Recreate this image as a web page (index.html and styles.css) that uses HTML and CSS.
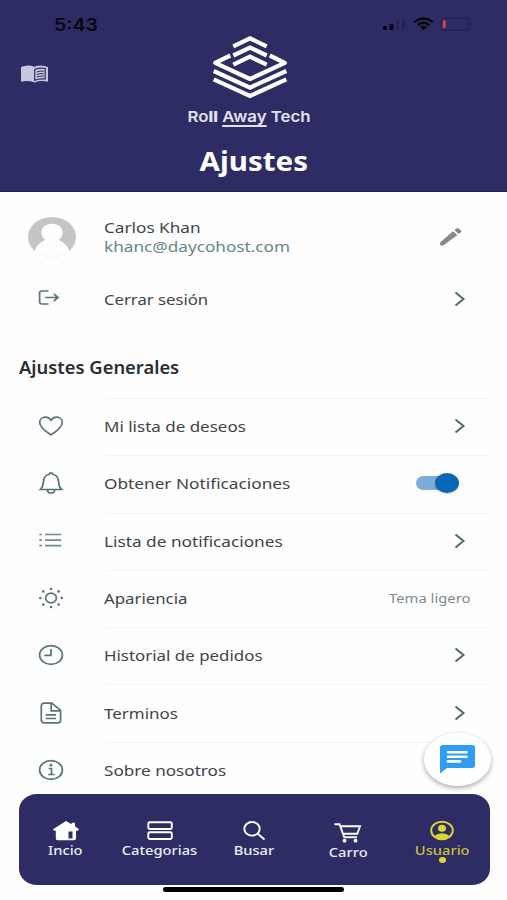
FILE: index.html
```html
<!DOCTYPE html>
<html lang="es">
<head>
<meta charset="utf-8">
<title>Ajustes</title>
<link rel="stylesheet" href="styles.css">
</head>
<body>
<main class="screen">
  <header class="header">
    <div class="status">
      <span class="time">5:43</span>
      <svg class="status-icons" width="94" height="18" viewBox="0 0 94 18">
        <rect x="1" y="11" width="4" height="4" rx="1"/><rect x="7.5" y="9" width="4" height="6" rx="1"/>
        <g fill="#25234f"><rect x="14" y="6" width="3" height="9" rx="1"/><rect x="20" y="4" width="3" height="11" rx="1"/></g>
        <g fill="none" stroke="#050509" stroke-width="2.4"><path d="M32.3 7.1Q41.5-.3 50.7 7.1M35.7 10.2Q41.5 5.5 47.3 10.2"/></g>
        <path d="M38 12Q41.5 9.5 45 12L41.5 15.2Z"/>
        <rect x="59.5" y="3.3" width="28" height="12" rx="3.5" fill="none" stroke="#25224d" stroke-width="1.4"/>
        <path d="M89.5 6.5Q93 9 89.5 11.8Z" fill="#25224d"/>
        <rect x="60.7" y="5.2" width="2.9" height="8" rx="1" fill="#d7435e"/>
      </svg>
    </div>
    <div class="brand-row">
      <svg class="book" width="27" height="18" viewBox="0 0 27 18">
        <path fill="#c5c5dc" d="M0 2Q7-1 13.5 1.8Q20-1 27 2V16.8Q20 15 13.5 17.5Q7 15 0 16.8Z"/>
        <path fill="none" stroke="#2e2c64" stroke-width="1.2" d="M13.7 4.5Q19 2.5 24.2 3.5V14Q19 13.2 13.7 15.3Z"/>
        <path fill="none" stroke="#2e2c64" stroke-width="1" d="M15.7 7Q19 5.7 22.7 6.2M15.7 9.5Q19 8.2 22.7 8.7M15.7 12Q19 10.7 22.7 11.2"/>
      </svg>
      <svg class="logo" width="76" height="64" viewBox="0 0 76 64" fill="none" stroke="#fff" stroke-width="4.2">
        <path d="M21.3 11.3L38 3.3L54.7 11.3M21.3 20.5L38 12.5L54.7 20.5M21.3 29.7L38 21.7L54.7 29.7"/>
        <path stroke-linejoin="round" d="M18.3 20.5L3.2 27.8L38 44L72.8 27.8L57.7 20.5"/>
        <path d="M1.7 36L38 52.6L74.3 36M1.7 44.3L38 61L74.3 44.3"/>
      </svg>
    </div>
    <div class="brand"><span class="roll">Ro<b>ll</b></span> <span class="away">Away</span> Tech</div>
    <h1 class="title">Ajustes</h1>
  </header>

  <section class="row profile">
    <svg class="avatar" width="48" height="40" viewBox="0 0 48 40">
      <clipPath id="face"><ellipse cx="24" cy="20" rx="24" ry="20"/></clipPath>
      <g clip-path="url(#face)"><path fill="#c5c5c5" d="M0 0H48V40H0Z"/><path fill="#fefefe" d="M24 6.8C17.5 6.8 13.4 10.5 13.4 15.2C13.4 18.5 15 21.2 17.4 23C12 25 8.5 28.5 6.6 34L5 40H43L41.4 34C39.5 28.5 36 25 30.6 23C33 21.2 34.6 18.5 34.6 15.2C34.6 10.5 30.5 6.8 24 6.8Z"/></g>
    </svg>
    <div class="label who"><div class="t name">Carlos Khan</div><div class="t mail">khanc@daycohost.com</div></div>
    <svg class="pencil" width="24" height="20" viewBox="0 0 24 20" fill="#888"><path d="M1.3 15.2L14 4.2L18.4 7.9L5.4 17.8L2.4 18.7Q.6 18.5 1.3 15.2ZM15.3 3L17.6 1.4Q18.8.7 20 1.7L22 3.4Q23 4.4 21.9 5.3L19.7 7Z"/></svg>
  </section>
  <section class="row logout">
    <svg class="ic" width="26" height="22" viewBox="0 0 26 22"><path d="M10.5 4H3.8Q1.6 4 1.6 6V14.8Q1.6 17 3.8 17H10.5M7.2 10.5H19.6M15.8 6.8L20 10.5L15.8 14.2"/></svg>
    <div class="label"><span class="t w-logout">Cerrar sesión</span></div>
    <svg class="chev" width="12" height="16" viewBox="0 0 12 16"><path d="M1.5 1.5L9.5 8L1.5 14.5"/></svg>
  </section>

  <h2 class="section"><span class="t w-section">Ajustes Generales</span></h2>

  <div class="list">
    <div class="row item">
      <svg class="ic" width="26" height="22" viewBox="0 0 26 22"><path d="M13 19.8C9 17.2 1.7 12.7 1.7 7.5C1.7 4.1 4.3 2.2 7.3 2.2C9.8 2.2 11.8 3.3 13 5.2C14.2 3.3 16.2 2.2 18.7 2.2C21.7 2.2 24.3 4.1 24.3 7.5C24.3 12.7 17 17.2 13 19.8Z"/></svg>
      <div class="label"><span class="t w-wish">Mi lista de deseos</span></div>
      <svg class="chev" width="12" height="16" viewBox="0 0 12 16"><path d="M1.5 1.5L9.5 8L1.5 14.5"/></svg>
    </div>
    <div class="row item">
      <svg class="ic" width="26" height="22" viewBox="0 0 26 22"><path d="M2.5 17.5C7 13.5 4 8.5 7 4.7Q8.5 2.8 11 2.5Q11.4.9 13 .9Q14.6.9 15 2.5Q17.5 2.8 19 4.7C22 8.5 19 13.5 23.5 17.5ZM9.2 17.8Q9.8 21 13 21Q16.2 21 16.8 17.8"/></svg>
      <div class="label"><span class="t w-notif">Obtener Notificaciones</span></div>
      <div class="switch"><i class="knob"></i></div>
    </div>
    <div class="row item">
      <svg class="ic list-ic" width="26" height="22" viewBox="0 0 26 22"><path d="M1.3 4.5H4M7 4.5H23.2M1.3 10.1H4M7 10.1H23.2M1.3 15.7H4M7 15.7H23.2"/></svg>
      <div class="label"><span class="t w-nlist">Lista de notificaciones</span></div>
      <svg class="chev" width="12" height="16" viewBox="0 0 12 16"><path d="M1.5 1.5L9.5 8L1.5 14.5"/></svg>
    </div>
    <div class="row item">
      <svg class="ic" width="26" height="22" viewBox="0 0 26 22"><ellipse cx="13" cy="11" rx="5.4" ry="4.8"/><g class="dots"><circle cx="13" cy="2" r="1.3"/><circle cx="13" cy="20" r="1.3"/><circle cx="2.3" cy="11" r="1.3"/><circle cx="23.7" cy="11" r="1.3"/><circle cx="5.3" cy="4.4" r="1.3"/><circle cx="20.7" cy="4.4" r="1.3"/><circle cx="5.3" cy="17.6" r="1.3"/><circle cx="20.7" cy="17.6" r="1.3"/></g></svg>
      <div class="label"><span class="t w-look">Apariencia</span></div>
      <span class="theme">Tema ligero</span>
    </div>
    <div class="row item">
      <svg class="ic" width="26" height="22" viewBox="0 0 26 22"><ellipse cx="13" cy="11" rx="11.4" ry="9.3"/><path d="M13 5V11.4H6.3"/></svg>
      <div class="label"><span class="t w-hist">Historial de pedidos</span></div>
      <svg class="chev" width="12" height="16" viewBox="0 0 12 16"><path d="M1.5 1.5L9.5 8L1.5 14.5"/></svg>
    </div>
    <div class="row item">
      <svg class="ic" width="26" height="22" viewBox="0 0 26 22"><path d="M6.3 1.2H13.8L22.6 8.3V18.2Q22.6 20.9 19.6 20.9H6.3Q3.3 20.9 3.3 18.2V3.9Q3.3 1.2 6.3 1.2ZM13.2 1.5V8.8H22.2M7.7 12.8H18.2M7.7 16.5H18.2"/></svg>
      <div class="label"><span class="t w-terms">Terminos</span></div>
      <svg class="chev" width="12" height="16" viewBox="0 0 12 16"><path d="M1.5 1.5L9.5 8L1.5 14.5"/></svg>
    </div>
    <div class="row item last">
      <svg class="ic" width="26" height="22" viewBox="0 0 26 22"><ellipse cx="13" cy="11" rx="11.4" ry="9.3"/><path d="M10.6 9.5H13.5V15.3M10.2 15.5H16.4"/><circle class="dots" cx="12.9" cy="6.2" r="1.4"/></svg>
      <div class="label"><span class="t w-about">Sobre nosotros</span></div>
    </div>
    <div class="fab">
      <svg width="35" height="29" viewBox="0 0 35 29"><path fill="#319df0" d="M3 0H32Q35 0 35 2.5V20.5Q35 23 32 23H7L0 28.5V2.5Q0 0 3 0Z"/><path stroke="#fff" stroke-width="2.6" stroke-linecap="round" d="M8 7.2H26.5M8 11.8H26.5M8 16.4H20"/></svg>
    </div>
  </div>

  <nav class="nav">
    <a class="tab"><svg width="28" height="22" viewBox="0 0 28 22"><path fill="#fff" d="M14 1L19.6 4.3V2.8H23V6.3L27 9.3L25.8 10.7H24V18.5Q24 20.3 22 20.3H5.5Q3.8 20.3 3.8 18.5V10.7H2.2L1 9.3Z"/><path fill="#2e2c64" d="M16.5 11.5H20.5V18.5H16.5Z"/></svg><span>Incio</span></a>
    <a class="tab"><svg width="28" height="22" viewBox="0 0 28 22"><rect x="2.3" y="2.2" width="23.5" height="6.8" rx="1.5"/><rect x="2.3" y="12.2" width="23.5" height="6.8" rx="1.5"/></svg><span>Categorias</span></a>
    <a class="tab"><svg width="28" height="22" viewBox="0 0 28 22"><ellipse cx="12" cy="8.8" rx="7.7" ry="6.8"/><path d="M17.5 13.5L24.5 19.5"/></svg><span>Busar</span></a>
    <a class="tab cart"><svg width="28" height="22" viewBox="0 0 28 22"><path d="M.5 2.2H5.5L10.3 15.3H23M6.3 4.2H26L23.3 11.7H9"/><g fill="#fff" stroke="none"><circle cx="10.5" cy="18.7" r="1.9"/><circle cx="21.5" cy="18.7" r="1.9"/></g></svg><span>Carro</span></a>
    <a class="tab active"><svg width="28" height="22" viewBox="0 0 28 22"><ellipse cx="14" cy="10.5" rx="10.8" ry="8.8"/><g fill="#dcd631" stroke="none"><ellipse cx="14" cy="8.3" rx="4" ry="3.5"/><path d="M6.3 16Q9.5 13.2 14 13.2Q18.5 13.2 21.7 16Q18.5 19 14 19Q9.5 19 6.3 16Z"/></g></svg><span>Usuario</span><i class="dot"></i></a>
  </nav>
  <div class="home-bar"></div>
</main>
</body>
</html>
```
FILE: styles.css
```css
* { box-sizing: border-box; }
body { margin: 0; background: #fefefe; font-family: "Noto Sans", "Open Sans", sans-serif; color: #3e4447; }
.screen { width: 507px; height: 900px; overflow: hidden; display: flex; flex-direction: column; }
svg { display: block; flex: none; }

.header { height: 192px; flex: none; background: #2e2c64; border-bottom: 1px solid #211f58; color: #fff; display: flex; flex-direction: column; align-items: center; }
.status { width: 100%; height: 36px; flex: none; padding: 15px 31px 0 54px; display: flex; justify-content: space-between; }
.time { color: #07070d; font: 600 17px/20px Inter, sans-serif; transform: scaleX(1.15); transform-origin: left; }
.status-icons { fill: #050509; }
.brand-row { width: 100%; height: 64px; flex: none; display: grid; grid-template-columns: 190.5px 76px; padding-left: 21px; }
.book { margin-top: 29px; }
.logo { margin-top: -1px; }
.brand { height: 33px; padding-top: 6px; margin-right: 9px; font: 600 15px/22px Inter, "Open Sans", sans-serif; color: #e3e3f0; white-space: nowrap; transform: scaleX(1.12); }
.roll b { font-weight: 800; }
.away { text-decoration: underline; text-underline-offset: 3px; text-decoration-thickness: 1.5px; }
.title { margin: 9px 0 0; font-size: 26px; line-height: 38px; font-weight: 700; transform: scaleX(1.135); }

.row { display: grid; grid-template-columns: 104px 1fr auto; align-items: center; flex: none; }
.t { display: inline-block; white-space: nowrap; transform-origin: left; }
.label { font-size: 15px; line-height: 20px; }
.profile { height: 78px; padding: 12px 44px 0 0; }
.avatar { margin-left: 28px; align-self: center; }
.who { display: flex; flex-direction: column; align-items: flex-start; line-height: 19px; }
.name, .mail { transform: scaleX(1.145); }
.mail { color: #64868a; }
.w-logout { transform: scaleX(1.113); }
.w-section { transform: scaleX(1.08); }
.w-wish { transform: scaleX(1.133); }
.w-notif, .w-nlist { transform: scaleX(1.149); }
.w-look { transform: scaleX(1.12); }
.w-hist { transform: scaleX(1.126); }
.w-terms { transform: scaleX(1.13); }
.w-about { transform: scaleX(1.142); }
.logout { height: 56px; padding: 1px 41px 0 0; }
.ic { margin-left: 38px; fill: none; stroke: #567479; stroke-width: 1.7; }
.logout .ic { margin-top: -1px; }
.list-ic { stroke: #718b90; }
.dots { fill: #567479; stroke: none; }
.chev { fill: none; stroke: #4e6a6e; stroke-width: 2; }
.section { height: 72px; margin: 0; padding: 30px 0 0 19px; font-size: 17px; line-height: 24px; font-weight: 600; color: #292e32; flex: none; }

.list { height: 396px; flex: none; position: relative; }
.item { height: 57.3px; padding: 0 41px 1px 0; background: linear-gradient(#f4f4f4, #f4f4f4) 106px 0 / 382px 1px no-repeat; }
.switch { width: 42px; height: 14px; border-radius: 7px; background: #7badd8; position: relative; margin-right: 8px; }
.knob { position: absolute; right: -1px; top: -3px; width: 24px; height: 20px; border-radius: 50%; background: #0868b5; box-shadow: 0 1px 2px #0003; }
.theme { font-size: 13px; color: #7b8b8d; transform: scaleX(1.14); transform-origin: right; margin-right: -4px; }
.fab { position: absolute; left: 424px; top: 335px; width: 67px; height: 53px; border-radius: 50%; background: #fff; box-shadow: 0 2px 5px #0005; display: flex; align-items: center; justify-content: center; }

.nav { width: 471px; height: 91px; flex: none; margin-left: 18.5px; border-radius: 18px / 16px; background: #2e2c64; display: grid; grid-template-columns: repeat(5, 1fr); }
.tab { display: flex; flex-direction: column; align-items: center; padding-top: 26px; color: #ececf7; font-size: 13px; line-height: 18px; font-weight: 500; }
.tab svg { fill: none; stroke: #fff; stroke-width: 1.9; margin-bottom: -1px; }
.tab svg path[fill] { stroke: none; }
.tab span { transform: scaleX(1.13); }
.cart { padding-top: 28px; }
.active { color: #c5c139; }
.active svg { stroke: #dcd631; }
.dot { width: 7px; height: 6px; border-radius: 50%; background: #dcd631; margin-top: -2px; }
.home-bar { width: 181px; height: 5px; margin: 2px 0 0 163px; border-radius: 3px; background: #000; flex: none; }
```
